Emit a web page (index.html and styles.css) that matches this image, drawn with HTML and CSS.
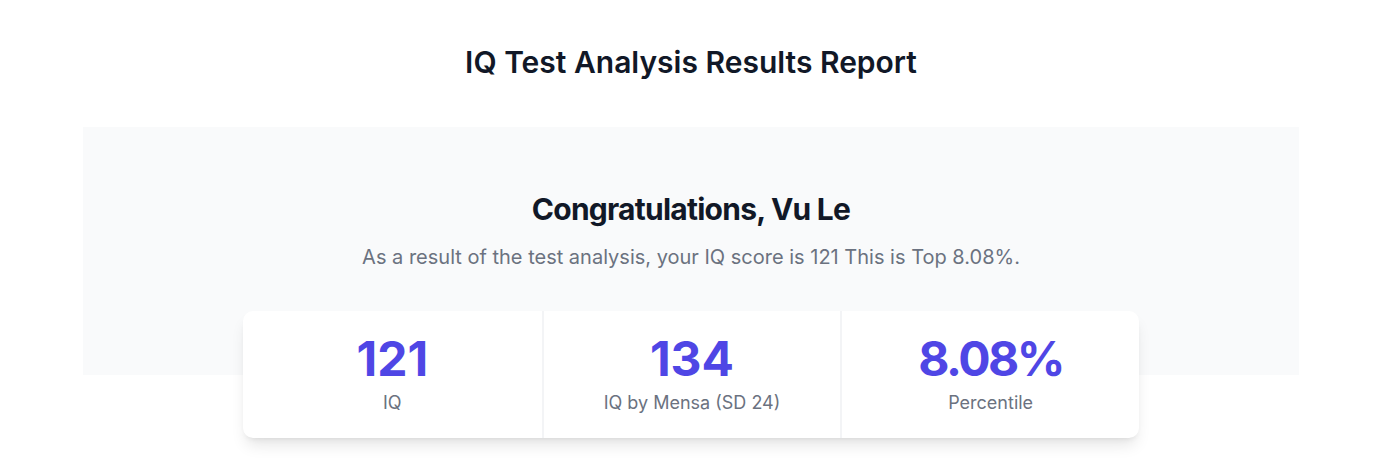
FILE: index.html
```html
<!DOCTYPE html>
<html lang="en">
<head>
<meta charset="utf-8">
<title>IQ Test Analysis Results Report</title>
<link rel="stylesheet" href="styles.css">
</head>
<body>
<main class="page">
  <h1 class="page-title">IQ Test Analysis Results Report</h1>
  <section class="panel">
    <h2 class="congrats">Congratulations, Vu Le</h2>
    <p class="summary">As a result of the test analysis, your IQ score is 121 This is Top 8.08%.</p>
    <div class="stats">
      <div class="stat">
        <div class="stat-value">121</div>
        <div class="stat-label">IQ</div>
      </div>
      <div class="stat">
        <div class="stat-value">134</div>
        <div class="stat-label">IQ by Mensa (SD 24)</div>
      </div>
      <div class="stat">
        <div class="stat-value stat-value-pct">8.08%</div>
        <div class="stat-label">Percentile</div>
      </div>
    </div>
  </section>
</main>
</body>
</html>
```

FILE: styles.css
```css
* { box-sizing: border-box; }
html, body { margin: 0; padding: 0; background: #ffffff; }
body {
  font-family: Inter, "Noto Sans", "Liberation Sans", sans-serif;
  color: #111827;
  padding-left: 9px;
}
.page {
  width: 1216px;
  margin: 0 auto;
  padding-top: 44px;
  padding-bottom: 34px;
}
.page-title {
  margin: 0;
  text-align: center;
  font-size: 30px;
  line-height: 36px;
  font-weight: 600;
  color: #111827;
}
.panel {
  margin-top: 47px;
  background: linear-gradient(#f9fafb, #f9fafb) top left / 100% 248px no-repeat;
  padding-top: 64px;
  display: flex;
  flex-direction: column;
  align-items: center;
}
.congrats {
  margin: 0;
  font-size: 30px;
  line-height: 36px;
  font-weight: 700;
  color: #111827;
  letter-spacing: -0.75px;
}
.summary {
  margin: 16px 0 0;
  font-size: 20px;
  line-height: 28px;
  color: #6b7280;
}
.stats {
  margin-top: 40px;
  width: 896px;
  display: grid;
  grid-template-columns: repeat(3, 1fr);
  background: #ffffff;
  border-radius: 10px;
  box-shadow: 0 10px 15px -3px rgba(0,0,0,0.1), 0 4px 6px -4px rgba(0,0,0,0.1);
}
.stat {
  padding: 24px 16px 21px;
  text-align: center;
  border-left: 2px solid #f3f4f6;
}
.stat:first-child { border-left: none; }
.stat-value {
  font-size: 48px;
  line-height: 48px;
  font-weight: 700;
  color: #4f46e5;
}
.stat-value-pct { letter-spacing: -2.5px; }
.stat-label {
  margin-top: 6px;
  font-size: 18px;
  line-height: 28px;
  color: #6b7280;
}
```
